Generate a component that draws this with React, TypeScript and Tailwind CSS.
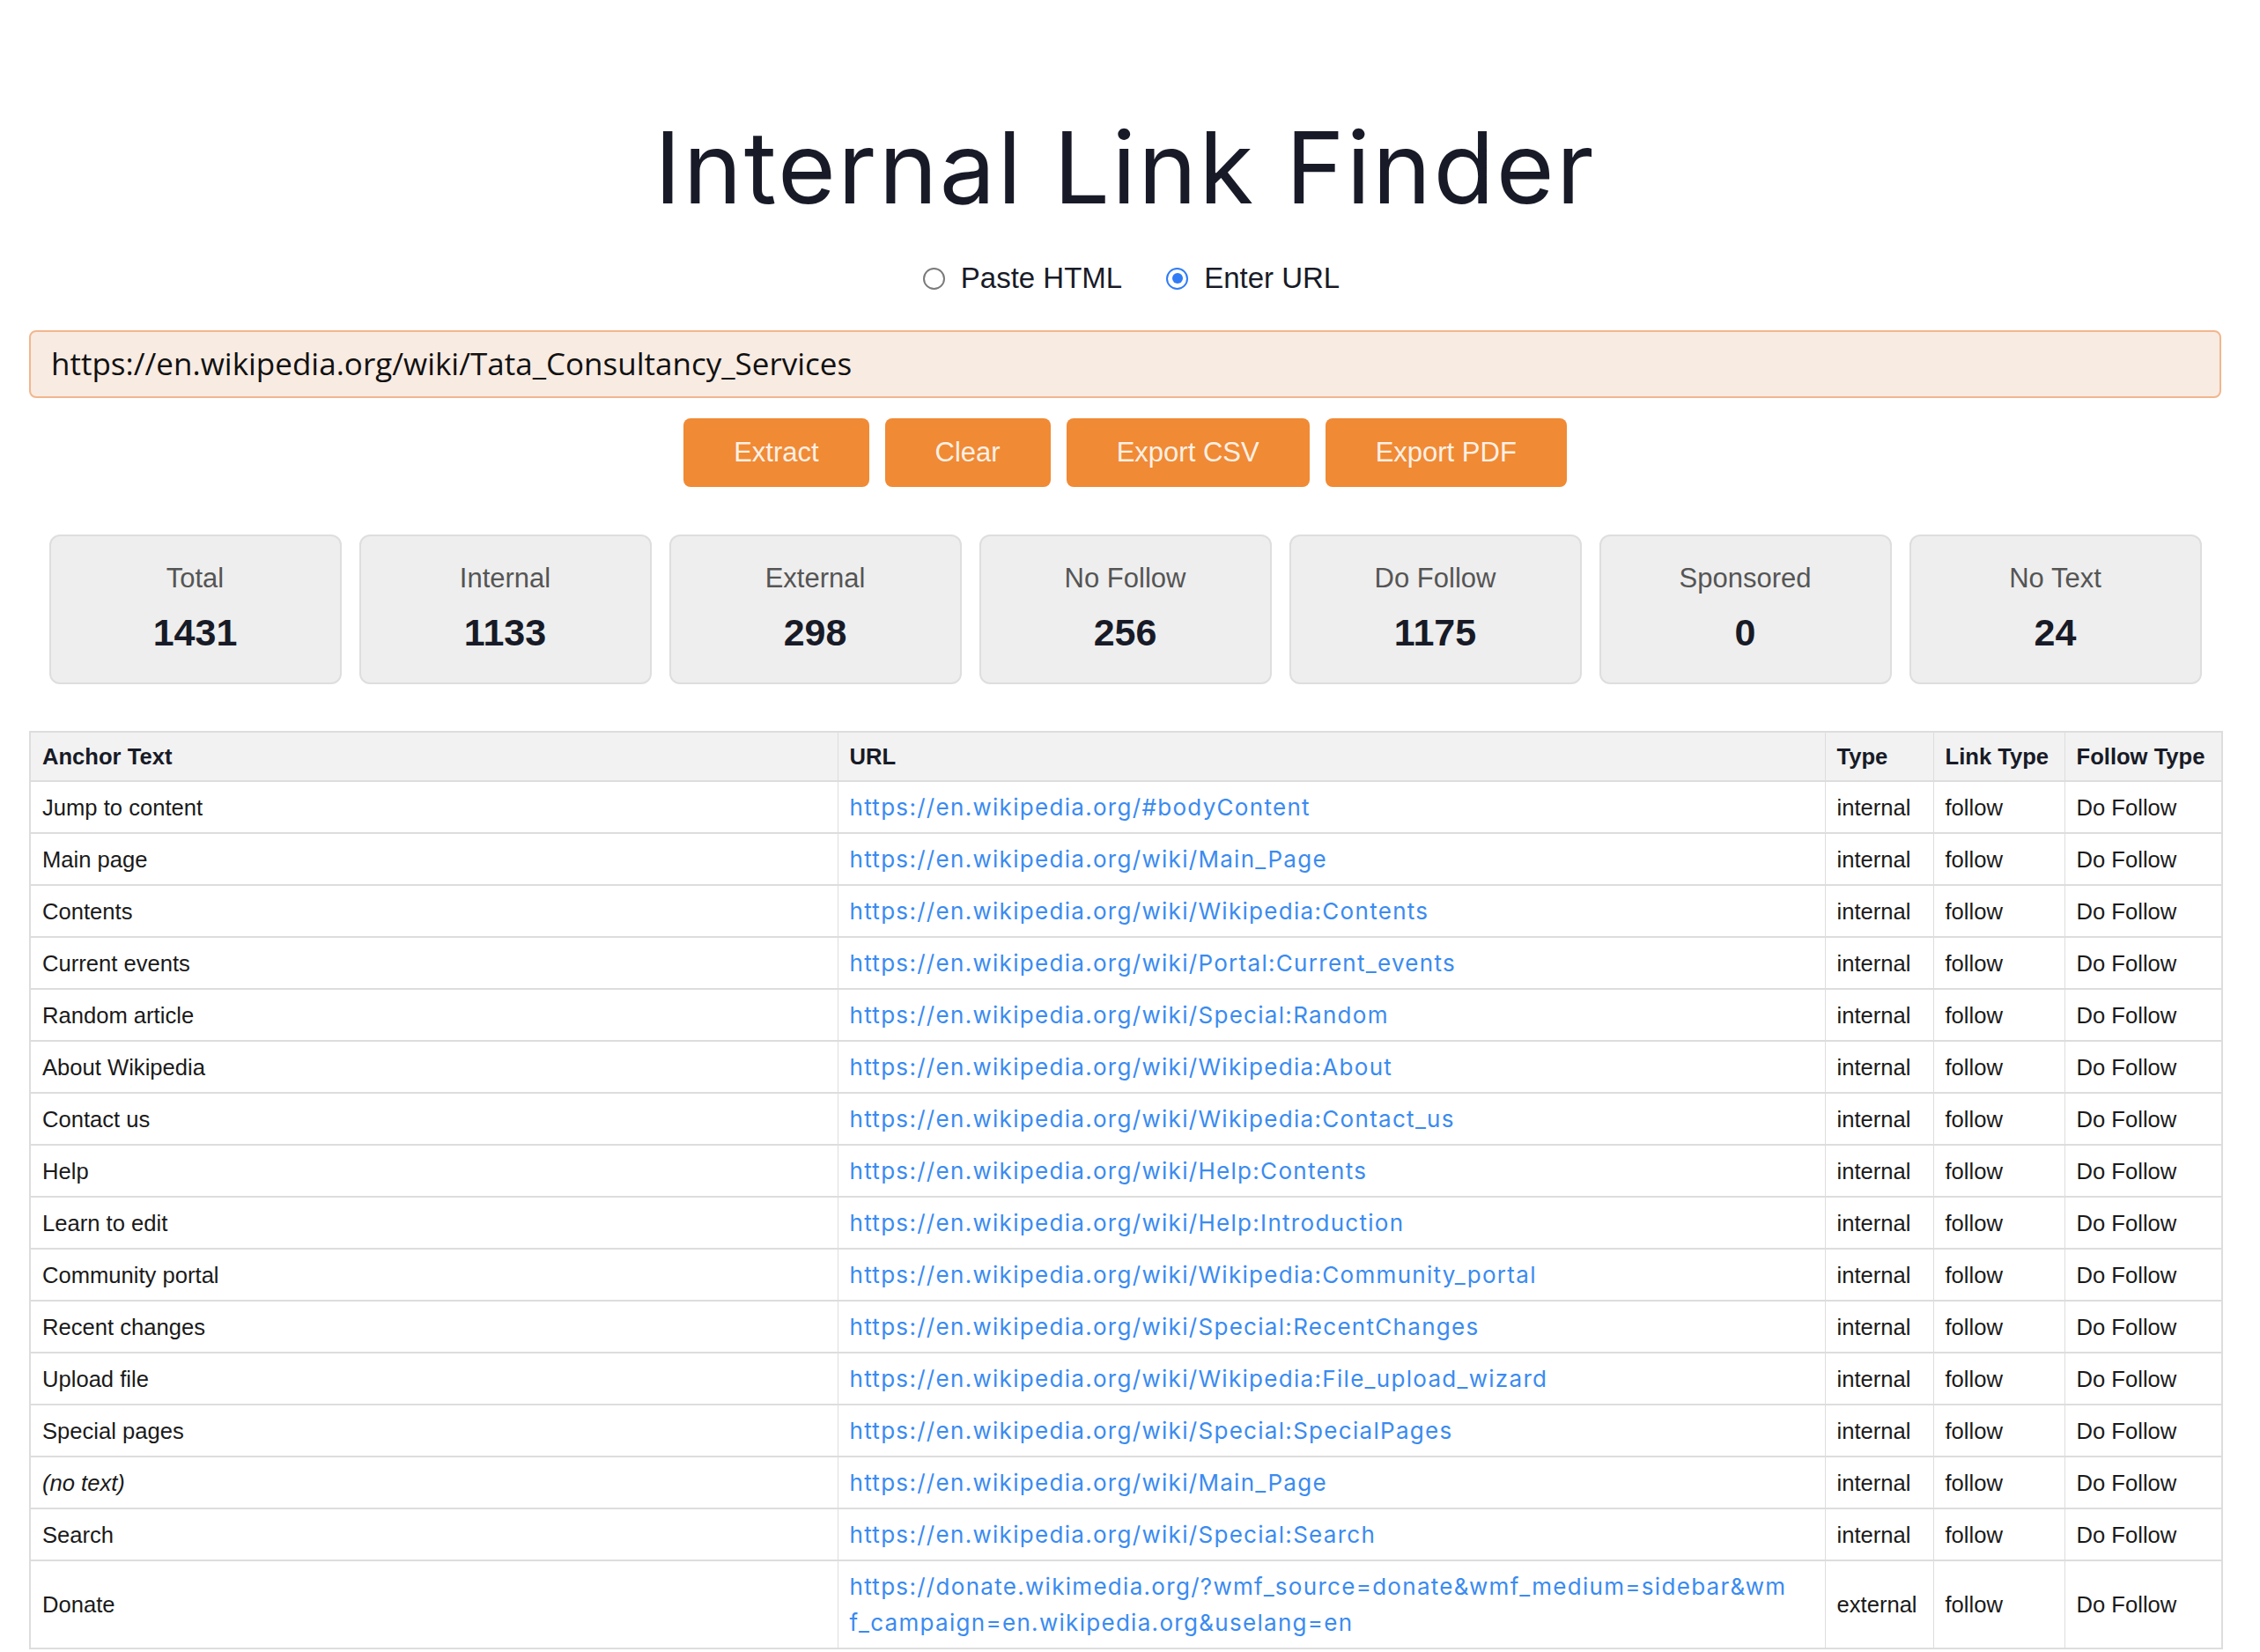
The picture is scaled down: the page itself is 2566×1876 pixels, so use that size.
import React from "react";

type LinkRow = {
  anchor: string;
  url: string;
  type: string;
  linkType: string;
  follow: string;
  noText?: boolean;
  // where the long URL wraps in the cell
  breakAt?: number;
};

const stats = [
  { label: "Total", value: 1431 },
  { label: "Internal", value: 1133 },
  { label: "External", value: 298 },
  { label: "No Follow", value: 256 },
  { label: "Do Follow", value: 1175 },
  { label: "Sponsored", value: 0 },
  { label: "No Text", value: 24 },
];

const wiki = "https://en.wikipedia.org/wiki/";
const donateUrl =
  "https://donate.wikimedia.org/?wmf_source=donate&wmf_medium=sidebar&wmf_campaign=en.wikipedia.org&uselang=en";

const rows: LinkRow[] = [
  { anchor: "Jump to content", url: "https://en.wikipedia.org/#bodyContent", type: "internal", linkType: "follow", follow: "Do Follow" },
  { anchor: "Main page", url: wiki + "Main_Page", type: "internal", linkType: "follow", follow: "Do Follow" },
  { anchor: "Contents", url: wiki + "Wikipedia:Contents", type: "internal", linkType: "follow", follow: "Do Follow" },
  { anchor: "Current events", url: wiki + "Portal:Current_events", type: "internal", linkType: "follow", follow: "Do Follow" },
  { anchor: "Random article", url: wiki + "Special:Random", type: "internal", linkType: "follow", follow: "Do Follow" },
  { anchor: "About Wikipedia", url: wiki + "Wikipedia:About", type: "internal", linkType: "follow", follow: "Do Follow" },
  { anchor: "Contact us", url: wiki + "Wikipedia:Contact_us", type: "internal", linkType: "follow", follow: "Do Follow" },
  { anchor: "Help", url: wiki + "Help:Contents", type: "internal", linkType: "follow", follow: "Do Follow" },
  { anchor: "Learn to edit", url: wiki + "Help:Introduction", type: "internal", linkType: "follow", follow: "Do Follow" },
  { anchor: "Community portal", url: wiki + "Wikipedia:Community_portal", type: "internal", linkType: "follow", follow: "Do Follow" },
  { anchor: "Recent changes", url: wiki + "Special:RecentChanges", type: "internal", linkType: "follow", follow: "Do Follow" },
  { anchor: "Upload file", url: wiki + "Wikipedia:File_upload_wizard", type: "internal", linkType: "follow", follow: "Do Follow" },
  { anchor: "Special pages", url: wiki + "Special:SpecialPages", type: "internal", linkType: "follow", follow: "Do Follow" },
  { anchor: "(no text)", url: wiki + "Main_Page", type: "internal", linkType: "follow", follow: "Do Follow", noText: true },
  { anchor: "Search", url: wiki + "Special:Search", type: "internal", linkType: "follow", follow: "Do Follow" },
  {
    anchor: "Donate",
    url: donateUrl,
    type: "external",
    linkType: "follow",
    follow: "Do Follow",
    breakAt: donateUrl.indexOf("f_campaign"),
  },
];

const Radio: React.FC<{ checked?: boolean; label: string }> = ({ checked, label }) => (
  <label className="flex items-center gap-[18px]">
    {checked ? (
      <span className="flex h-[25px] w-[25px] items-center justify-center rounded-full border-[2.5px] border-[#2f7cf6] bg-white">
        <span className="h-[12px] w-[12px] rounded-full bg-[#2f7cf6]" />
      </span>
    ) : (
      <span className="h-[25px] w-[25px] rounded-full border-2 border-[#7a7a7a] bg-white" />
    )}
    <span>{label}</span>
  </label>
);

const buttons = ["Extract", "Clear", "Export CSV", "Export PDF"];

export default function App() {
  return (
    <div className="w-[2555px] bg-white px-[33px] pb-[40px] font-['Liberation_Sans',Arial,sans-serif] text-[#1a1a1a]">
      <h1 className="mt-[134px] text-center font-['Inter',sans-serif] text-[113px] font-normal leading-none tracking-[2.3px] text-[#181b27]">
        Internal Link Finder
      </h1>

      <div className="mt-[50px] flex items-center justify-center gap-[50px] pl-[14px] text-[33px] leading-[38px] text-[#181b27]">
        <Radio label="Paste HTML" />
        <Radio checked label="Enter URL" />
      </div>

      <div className="mt-[40px] flex h-[77px] items-center rounded-[8px] border-2 border-[#f1b68e] bg-[#f8ebe2] pl-[23px] font-['Open_Sans',sans-serif] text-[35px] text-[#111]">
        https://en.wikipedia.org/wiki/Tata_Consultancy_Services
      </div>

      <div className="mt-[23px] flex justify-center gap-[18px]">
        {buttons.map((b) => (
          <button
            key={b}
            className="h-[78px] rounded-[8px] bg-[#f08a35] px-[57px] text-[31px] text-[#fdf0e4]"
          >
            {b}
          </button>
        ))}
      </div>

      <div className="mt-[54px] flex justify-center gap-[20px]">
        {stats.map((s) => (
          <div
            key={s.label}
            className="flex h-[170px] w-[332px] flex-col items-center rounded-[12px] border-2 border-[#dedede] bg-[#eeeeee] pt-[30px]"
          >
            <span className="text-[31px] leading-[36px] text-[#555]">{s.label}</span>
            <span className="mt-[19px] text-[43px] font-bold leading-[49px] text-[#181b27]">{s.value}</span>
          </div>
        ))}
      </div>

      <table className="mt-[53px] w-full table-fixed border-collapse text-left text-[25.6px]">
        <colgroup>
          <col className="w-[917px]" />
          <col className="w-[1121px]" />
          <col className="w-[123px]" />
          <col className="w-[149px]" />
          <col className="w-[179px]" />
        </colgroup>
        <thead>
          <tr className="bg-[#f2f2f2] text-[#181b27]">
            {["Anchor Text", "URL", "Type", "Link Type", "Follow Type"].map((h) => (
              <th
                key={h}
                className="whitespace-nowrap border-x border-y-2 border-[#dddddd] px-[13px] py-[12px] font-bold leading-[30px] first:border-l-2 last:border-r-2"
              >
                {h}
              </th>
            ))}
          </tr>
        </thead>
        <tbody>
          {rows.map((r, i) => (
            <tr key={i}>
              <td className="border-x border-y-2 border-l-2 border-[#dddddd] px-[13px] py-[8px] leading-[30px]">
                {r.noText ? <em>{r.anchor}</em> : r.anchor}
              </td>
              <td className="border-x border-y-2 border-[#dddddd] px-[13px] py-[8px] font-['Inter',sans-serif] text-[26px] leading-[41px] tracking-[1.3px] break-all text-[#3a8bf0]">
                {r.breakAt ? (
                  <a href={r.url}>
                    {r.url.slice(0, r.breakAt)}
                    <br />
                    {r.url.slice(r.breakAt)}
                  </a>
                ) : (
                  <a href={r.url}>{r.url}</a>
                )}
              </td>
              <td className="border-x border-y-2 border-[#dddddd] px-[13px] py-[8px] leading-[30px]">{r.type}</td>
              <td className="border-x border-y-2 border-[#dddddd] px-[13px] py-[8px] leading-[30px]">{r.linkType}</td>
              <td className="border-x border-y-2 border-r-2 border-[#dddddd] px-[13px] py-[8px] leading-[30px]">{r.follow}</td>
            </tr>
          ))}
        </tbody>
      </table>
    </div>
  );
}
